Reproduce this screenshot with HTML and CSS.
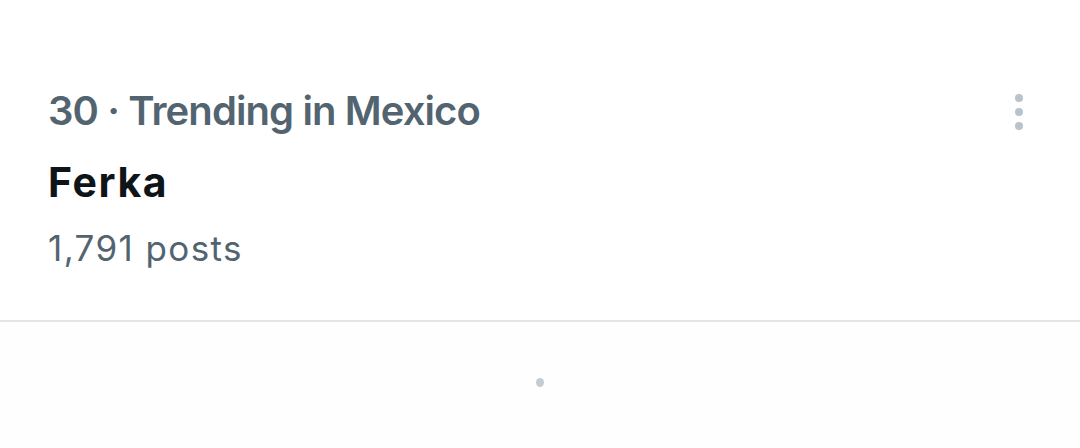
FILE: index.html
```html
<!DOCTYPE html>
<html>
<head>
<meta charset="utf-8">
<link rel="stylesheet" href="styles.css">
</head>
<body>
<div class="trend">
  <div class="trend-main">
    <div class="trend-meta">30 · Trending in Mexico</div>
    <div class="trend-title">Ferka</div>
    <div class="trend-count">1,791 posts</div>
  </div>
  <div class="trend-more">
    <span class="dot"></span><span class="dot"></span><span class="dot"></span>
  </div>
</div>
<div class="lower">
  <span class="loader-dot"></span>
</div>
</body>
</html>
```

FILE: styles.css
```css
html, body {
  margin: 0;
  padding: 0;
  background: #ffffff;
  width: 1080px;
  height: 448px;
  overflow: hidden;
  font-family: Inter, Roboto, "Liberation Sans", sans-serif;
}
.trend {
  display: flex;
  justify-content: space-between;
  padding: 87px 57px 0 48px;
  height: 322px;
  box-sizing: border-box;
  border-bottom: 2px solid #e3e6e8;
}
.trend-main {
  display: flex;
  flex-direction: column;
}
.trend-meta {
  color: #536471;
  font-size: 40px;
  font-weight: 600;
  line-height: 48px;
  letter-spacing: -0.9px;
}
.trend-title {
  color: #0f1419;
  font-size: 41px;
  font-weight: 700;
  line-height: 48px;
  margin-top: 23px;
  letter-spacing: 1.6px;
}
.trend-count {
  color: #536471;
  font-size: 35px;
  font-weight: 400;
  line-height: 44px;
  margin-top: 20px;
  letter-spacing: 1.4px;
}
.trend-more {
  display: flex;
  flex-direction: column;
  gap: 6px;
  padding-top: 7px;
}
.dot {
  width: 8px;
  height: 8px;
  border-radius: 50%;
  background: #b9c3cc;
}
.lower {
  background: #fefefe;
  height: 126px;
  display: flex;
  justify-content: center;
  padding-top: 56px;
  box-sizing: border-box;
}
.loader-dot {
  width: 8px;
  height: 9px;
  border-radius: 50%;
  background: #c4ccd3;
}
```
